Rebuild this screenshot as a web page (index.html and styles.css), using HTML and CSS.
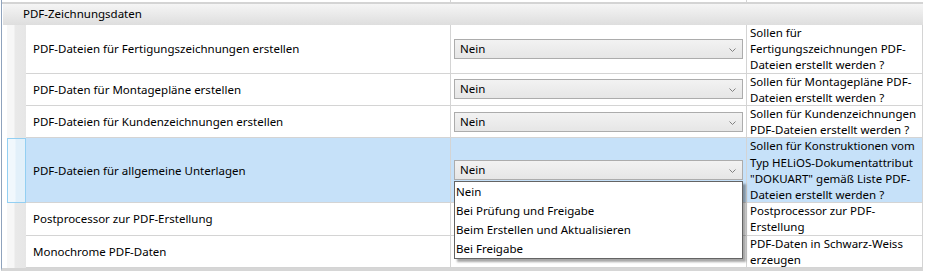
FILE: index.html
```html
<!DOCTYPE html>
<html lang="de">
<head>
    <meta charset="UTF-8">
    <title>PDF-Zeichnungsdaten</title>
    <link rel="stylesheet" href="styles.css">
</head>
<body>
    <div class="sheet">
        <div class="topStrip">
            <div class="stripLabel"></div>
            <div class="stripValue"></div>
            <div class="stripDesc"></div>
        </div>

        <div class="group">PDF-Zeichnungsdaten</div>

        <div class="row">
            <div class="gutter"></div>
            <div class="label">PDF-Dateien für Fertigungszeichnungen erstellen</div>
            <div class="value"><div class="combo">Nein<svg class="chevron" width="7" height="4" viewBox="0 0 7 4"><polyline points="0.5,0.5 3.5,3.5 6.5,0.5" /></svg></div></div>
            <div class="desc">Sollen für<br>Fertigungszeichnungen PDF-<br>Dateien erstellt werden ?</div>
        </div>

        <div class="row">
            <div class="gutter"></div>
            <div class="label">PDF-Daten für Montagepläne erstellen</div>
            <div class="value"><div class="combo">Nein<svg class="chevron" width="7" height="4" viewBox="0 0 7 4"><polyline points="0.5,0.5 3.5,3.5 6.5,0.5" /></svg></div></div>
            <div class="desc">Sollen für Montagepläne PDF-<br>Dateien erstellt werden ?</div>
        </div>

        <div class="row">
            <div class="gutter"></div>
            <div class="label">PDF-Dateien für Kundenzeichnungen erstellen</div>
            <div class="value"><div class="combo">Nein<svg class="chevron" width="7" height="4" viewBox="0 0 7 4"><polyline points="0.5,0.5 3.5,3.5 6.5,0.5" /></svg></div></div>
            <div class="desc">Sollen für Kundenzeichnungen<br>PDF-Dateien erstellt werden ?</div>
        </div>

        <div class="row selected">
            <div class="gutter"></div>
            <div class="label">PDF-Dateien für allgemeine Unterlagen</div>
            <div class="value">
                <div class="combo open">Nein<svg class="chevron" width="7" height="4" viewBox="0 0 7 4"><polyline points="0.5,0.5 3.5,3.5 6.5,0.5" /></svg>
                    <div class="dropList">
                        <div class="dropItem">Nein</div>
                        <div class="dropItem">Bei Prüfung und Freigabe</div>
                        <div class="dropItem">Beim Erstellen und Aktualisieren</div>
                        <div class="dropItem">Bei Freigabe</div>
                    </div>
                </div>
            </div>
            <div class="desc">Sollen für Konstruktionen vom<br>Typ HELiOS-Dokumentattribut<br>"DOKUART" gemäß Liste PDF-<br>Dateien erstellt werden ?</div>
        </div>

        <div class="row">
            <div class="gutter"></div>
            <div class="label">Postprocessor zur PDF-Erstellung</div>
            <div class="value"></div>
            <div class="desc">Postprocessor zur PDF-<br>Erstellung</div>
        </div>

        <div class="row">
            <div class="gutter"></div>
            <div class="label">Monochrome PDF-Daten</div>
            <div class="value"></div>
            <div class="desc">PDF-Daten in Schwarz-Weiss<br>erzeugen</div>
        </div>
    </div>
</body>
</html>
```

FILE: styles.css
```css
body {
    margin: 0;
    background-color: white;
    font-family: "Noto Sans", "Open Sans", sans-serif;
    font-size: 11.5px;
    color: #000;
}

.sheet {
    width: 921px;
    margin-left: 1px;
    border-left: 1px solid #8fa3bd;
    border-bottom: 3px solid #d6d6d6;
}

.topStrip {
    display: flex;
    height: 2px;
    border-bottom: 2px solid #d4d4d4;
}

.stripLabel {
    width: 448px;
    border-right: 1px solid #d4d4d4;
}

.stripValue {
    width: 295px;
    border-right: 1px solid #d4d4d4;
}

.group {
    height: 21px;
    line-height: 20px;
    margin-left: 1px;
    padding-left: 20px;
    background: linear-gradient(to bottom, #f5f5f5, #dedede);
}

.row {
    display: flex;
    margin-left: 5px;
    border-bottom: 1px solid #d4d4d4;
    border-right: 1px solid #d4d4d4;
}

.gutter {
    width: 19px;
    flex-shrink: 0;
    background: linear-gradient(to right, #f7f7f7 0, #f7f7f7 7px, #e9e9e9 8px, #e6e6e6 100%);
    margin-bottom: -1px;
}

.label {
    width: 417px;
    padding-left: 7px;
    display: flex;
    align-items: center;
    border-right: 1px solid #d4d4d4;
}

.value {
    width: 289px;
    padding: 0 3px;
    display: flex;
    align-items: center;
    border-right: 1px solid #d4d4d4;
}

.desc {
    flex: 1;
    padding-left: 3px;
    line-height: 16.2px;
    margin-bottom: -1px;
    white-space: nowrap;
    overflow: hidden;
}

.combo {
    position: relative;
    box-sizing: border-box;
    width: 100%;
    height: 20px;
    line-height: 18px;
    padding-left: 5px;
    border: 1px solid #acacac;
    background: linear-gradient(to bottom, #f2f2f2, #e6e6e6);
}

.chevron {
    position: absolute;
    right: 6px;
    top: 8px;
    fill: none;
    stroke: #808080;
    stroke-width: 1;
}

.selected {
    background-color: #c6e1f9;
}

.selected .gutter {
    box-sizing: border-box;
    border: 1px solid #93cff2;
    background: linear-gradient(to right, #f1f8fd 0, #f1f8fd 7px, #e2f0fa 8px, #e2f0fa 100%);
}

.dropList {
    position: absolute;
    left: -1px;
    top: 20px;
    width: 287px;
    background-color: white;
    border: 1px solid #646464;
    box-shadow: 3px 3px 2px rgba(0, 0, 0, 0.35);
    z-index: 10;
}

.dropItem {
    height: 19px;
    line-height: 19px;
    padding-left: 1px;
    white-space: nowrap;
    overflow: hidden;
}
```
